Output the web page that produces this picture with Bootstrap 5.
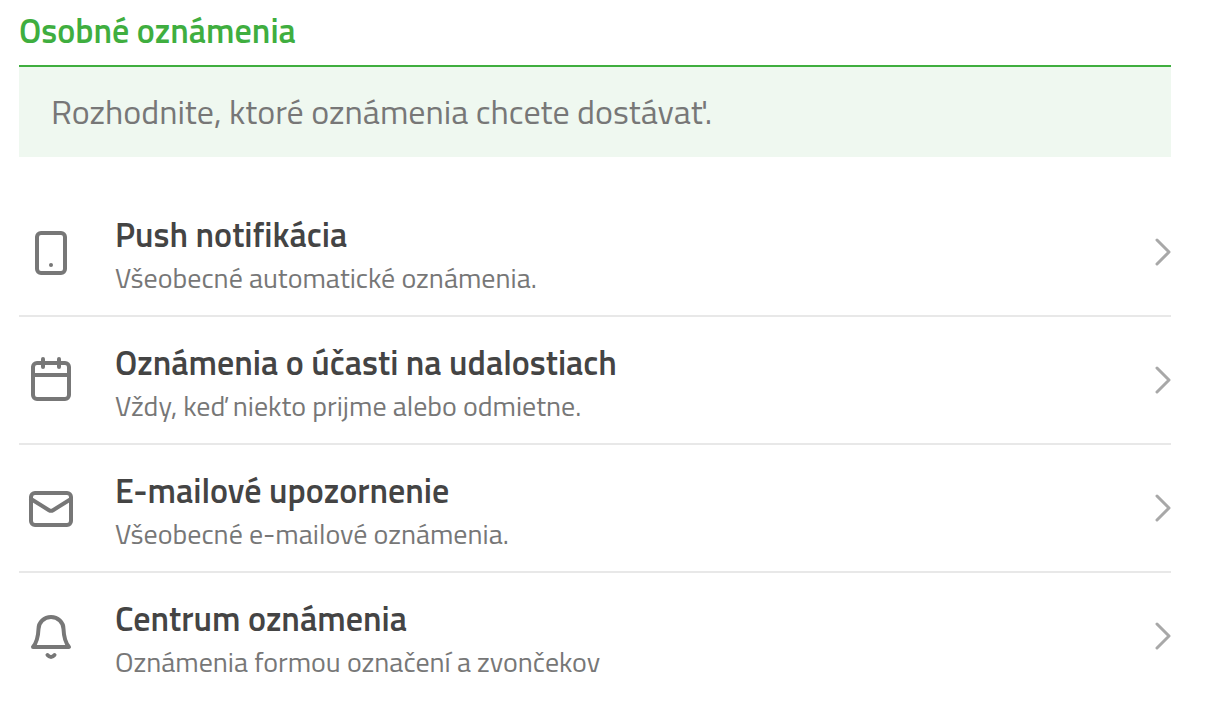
<!DOCTYPE html>
<html lang="sk">
<head>
<meta charset="utf-8">
<meta name="viewport" content="width=device-width, initial-scale=1">
<title>Osobné oznámenia</title>
<link href="https://cdn.jsdelivr.net/npm/bootstrap@5.3.0/dist/css/bootstrap.min.css" rel="stylesheet">
<style>
body { font-family: "Titillium Web", Roboto, sans-serif; background: #fff; color: #777; }
.settings { padding: 0 51px 0 19px; }
.settings-title { color: #3fae3f; font-size: 34px; line-height: 40px; font-weight: 600; padding: 10px 0 15px; border-bottom: 2px solid #3fae3f; }
.settings-intro { background: #eff8f0; font-size: 34px; line-height: 40px; font-weight: 400; padding: 24px 32px 26px; margin-bottom: 32px; }
.settings-list .list-group-item { height: 128px; padding: 0; border-width: 0 0 2px; border-color: #e8e8e8; background: none; color: #777; }
.settings-list .list-group-item:last-child { border-width: 0 0 2px; border-color: transparent; }
.item-icon { width: 48px; height: 48px; margin: 2px 40px 0 8px; fill: none; stroke: #777; stroke-width: 4; stroke-linecap: round; stroke-linejoin: round; }
.item-label { padding-top: 8px; }
.item-title { font-size: 34px; line-height: 44px; font-weight: 600; color: #444; }
.item-text { font-size: 28px; line-height: 44px; font-weight: 400; }
.item-arrow { width: 18px; height: 32px; fill: none; stroke: #a8a8a8; stroke-width: 3; stroke-linecap: round; stroke-linejoin: round; }
</style>
</head>
<body>
<main class="settings">
  <h1 class="settings-title mb-0">Osobné oznámenia</h1>
  <p class="settings-intro">Rozhodnite, ktoré oznámenia chcete dostávať.</p>
  <div class="list-group list-group-flush settings-list">
    <a href="#push" class="list-group-item d-flex align-items-center">
      <svg class="item-icon flex-shrink-0" viewBox="0 0 48 48" aria-hidden="true"><rect x="10" y="4" width="28" height="40" rx="4"/><circle cx="24" cy="36" r="2" fill="#777" stroke="none"/></svg>
      <span class="item-label flex-grow-1"><span class="item-title d-block">Push notifikácia</span><span class="item-text d-block">Všeobecné automatické oznámenia.</span></span>
      <svg class="item-arrow flex-shrink-0" viewBox="0 0 18 32" aria-hidden="true"><path d="M4 4 16 16 4 28"/></svg>
    </a>
    <a href="#events" class="list-group-item d-flex align-items-center">
      <svg class="item-icon flex-shrink-0" viewBox="0 0 48 48" aria-hidden="true"><rect x="6" y="6" width="36" height="36" rx="4"/><path d="M6 18H42M16 2v8M32 2v8"/></svg>
      <span class="item-label flex-grow-1"><span class="item-title d-block">Oznámenia o účasti na udalostiach</span><span class="item-text d-block">Vždy, keď niekto prijme alebo odmietne.</span></span>
      <svg class="item-arrow flex-shrink-0" viewBox="0 0 18 32" aria-hidden="true"><path d="M4 4 16 16 4 28"/></svg>
    </a>
    <a href="#email" class="list-group-item d-flex align-items-center">
      <svg class="item-icon flex-shrink-0" viewBox="0 0 48 48" aria-hidden="true"><rect x="4" y="8" width="40" height="32" rx="4"/><path d="M4 14 22 25.200Q24 26.400 26 25.200L44 14"/></svg>
      <span class="item-label flex-grow-1"><span class="item-title d-block">E-mailové upozornenie</span><span class="item-text d-block">Všeobecné e-mailové oznámenia.</span></span>
      <svg class="item-arrow flex-shrink-0" viewBox="0 0 18 32" aria-hidden="true"><path d="M4 4 16 16 4 28"/></svg>
    </a>
    <a href="#center" class="list-group-item d-flex align-items-center">
      <svg class="item-icon flex-shrink-0" viewBox="0 0 48 48" aria-hidden="true"><path d="M6 34Q11 28 11.500 16A12.500 12 0 0 1 36.500 16Q37 28 42 34ZM20.500 42Q24 46 27.500 42"/></svg>
      <span class="item-label flex-grow-1"><span class="item-title d-block">Centrum oznámenia</span><span class="item-text d-block">Oznámenia formou označení a zvončekov</span></span>
      <svg class="item-arrow flex-shrink-0" viewBox="0 0 18 32" aria-hidden="true"><path d="M4 4 16 16 4 28"/></svg>
    </a>
  </div>
</main>
<script src="https://cdn.jsdelivr.net/npm/bootstrap@5.3.0/dist/js/bootstrap.bundle.min.js"></script>
</body>
</html>
